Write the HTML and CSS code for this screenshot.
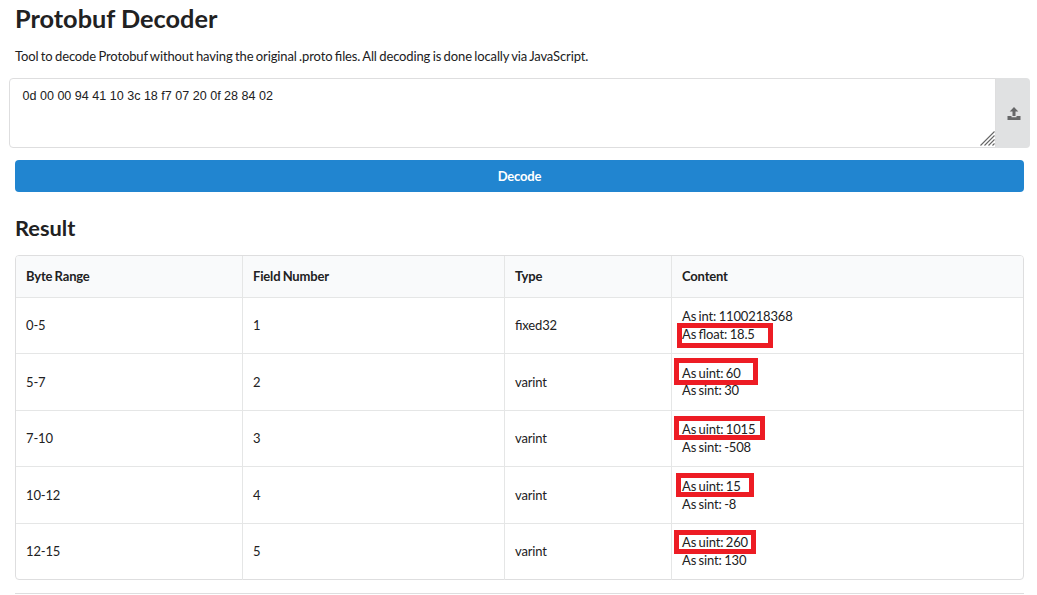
FILE: index.html
```html
<!DOCTYPE html>
<html lang="en">
<head>
<meta charset="utf-8">
<title>Protobuf Decoder</title>
<link rel="stylesheet" href="styles.css">
</head>
<body>
<main class="page">
  <h1 class="title">Protobuf Decoder</h1>
  <p class="intro">Tool to decode Protobuf without having the original .proto files. All decoding is done locally via JavaScript.</p>
  <div class="input-row">
    <div class="hex-input">0d 00 00 94 41 10 3c 18 f7 07 20 0f 28 84 02
      <svg class="grip" viewBox="0 0 15 15" width="15" height="15"><path d="M.5 14.500l14-14M4.500 14.500l10-10M8.500 14.500l6-6M12.500 14.500l2-2"/></svg>
    </div>
    <button class="upload" aria-label="Upload">
      <svg viewBox="0 0 14 13" width="14" height="13"><path d="M7 0l4.300 4.500H8.500V9h-3V4.500H2.700zM.5 9h4v1.200h5V9h4v4H.5z"/></svg>
    </button>
  </div>
  <button class="decode">Decode</button>
  <h2 class="subtitle">Result</h2>
  <div class="table">
    <div class="row head"><div>Byte Range</div><div>Field Number</div><div>Type</div><div>Content</div></div>
    <div class="row"><div>0-5</div><div>1</div><div>fixed32</div><div class="content"><span>As int: 1100218368</span><span>As float: 18.5</span><span class="mark mark-float"></span></div></div>
    <div class="row tall"><div>5-7</div><div>2</div><div>varint</div><div class="content tight"><span>As uint: 60</span><span>As sint: 30</span><span class="mark mark-60"></span></div></div>
    <div class="row"><div>7-10</div><div>3</div><div>varint</div><div class="content"><span>As uint: 1015</span><span>As sint: -508</span><span class="mark mark-1015"></span></div></div>
    <div class="row tall"><div>10-12</div><div>4</div><div>varint</div><div class="content"><span>As uint: 15</span><span>As sint: -8</span><span class="mark mark-15"></span></div></div>
    <div class="row"><div>12-15</div><div>5</div><div>varint</div><div class="content"><span>As uint: 260</span><span>As sint: 130</span><span class="mark mark-260"></span></div></div>
  </div>
  <hr class="divider">
</main>
</body>
</html>
```
FILE: styles.css
```css
* { box-sizing: border-box; }
body { margin: 0; background: #fff; color: #212122; font: 13px/18px Lato, sans-serif; font-feature-settings: "liga" 1; overflow: hidden; }
.page { padding: 2px 13px 0 15px; }
.title { margin: 0; font-size: 25.3px; line-height: 32px; font-weight: 700; }
.intro { margin: 13px 0 13px; height: 18px; white-space: nowrap; letter-spacing: -.13px; word-spacing: -.75px; }
.input-row { display: flex; height: 70px; margin: 0 -6px 12px -6px; }
.hex-input { position: relative; width: 987px; flex: none; padding: 9px 12.5px; border: 1px solid #dededf; border-radius: 4px 0 0 4px; font: 12.55px/17px "Liberation Sans", Arial, sans-serif; }
.grip { position: absolute; right: 0; bottom: 1px; fill: none; stroke: #666; stroke-width: 1.1; }
.upload { flex: 1; display: flex; align-items: center; justify-content: center; padding: 0 0 0 2px; margin-left: -1px; border: 0; border-radius: 0 4px 4px 0; background: #e0e1e2; }
.upload svg { fill: #666768; }
.decode { display: block; width: 100%; height: 32px; padding: 0; border: 0; border-radius: 4px; background: #2185d0; color: #fff; font: 700 13px/32px Lato, sans-serif; letter-spacing: -.2px; }
.subtitle { margin: 21px 0 13px; font-size: 21.8px; line-height: 29px; font-weight: 700; }
.table { height: 325px; border: 1px solid #dededf; border-radius: 4px; letter-spacing: -.15px; word-spacing: -.7px; }
.row { display: grid; grid-template-columns: 227px 262px 167px 1fr; height: 56px; }
.row.tall { height: 57px; }
.row > div { display: flex; align-items: center; padding: 0 10px 1px; border-bottom: 1px solid #e5e6e6; border-right: 1px solid #e5e6e6; }
.row.tall > div { padding-bottom: 0; }
.row > div:last-child { border-right: 0; }
.row:last-child > div { border-bottom: 0; padding-bottom: 2px; }
.row.head { height: 42px; background: #f9fafb; border-radius: 3px 3px 0 0; font-weight: 700; }
.row.head > div { letter-spacing: -.17px; }
.row > .content { display: flex; flex-direction: column; align-items: flex-start; justify-content: flex-start; position: relative; padding-top: 9px; white-space: nowrap; }
.row.tall > .content { padding-top: 10px; }
.row.tall > .content.tight { padding-top: 11px; line-height: 17px; }
.mark { position: absolute; border: 5px solid #ed1c24; }
.mark-float { left: 5px; top: 25px; width: 96px; height: 25px; }
.mark-60 { left: 2px; top: 4px; width: 84px; height: 27px; }
.mark-1015 { left: 2px; top: 5px; width: 91px; height: 24px; }
.mark-15 { left: 4px; top: 6px; width: 78px; height: 24px; }
.mark-260 { left: 2px; top: 6px; width: 82px; height: 24px; }
.divider { margin: 13px 0 0; border: 0; border-top: 1px solid #dededf; }
```
